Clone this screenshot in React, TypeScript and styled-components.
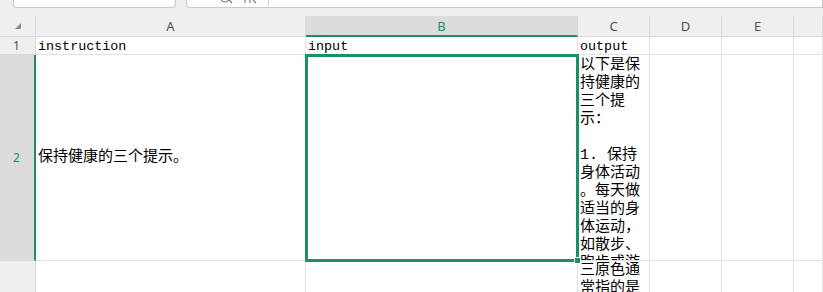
import React from 'react'
import styled, { createGlobalStyle } from 'styled-components'

const GREEN = '#1d8f68'
const GRID = '#e2e2e2'

const GlobalStyle = createGlobalStyle`
  html, body {
    margin: 0;
    padding: 0;
    background: #ffffff;
    overflow: hidden;
  }
  body {
    font-family: "Noto Sans", "Liberation Sans", sans-serif;
  }
`

const Page = styled.div`
  width: 823px;
  height: 292px;
  display: flex;
  flex-direction: column;
  overflow: hidden;
  background: #efefef;
`

const FormulaBar = styled.div`
  height: 16px;
  flex-shrink: 0;
  display: flex;
  align-items: flex-start;
  gap: 10px;
  padding-left: 13px;
  background: #efefef;
`

const BarBox = styled.div<{ grow?: boolean }>`
  height: 7px;
  width: ${({ grow }) => (grow ? 'auto' : '161px')};
  flex: ${({ grow }) => (grow ? '1' : 'none')};
  background: #ffffff;
  border: 1px solid #c9c9c9;
  border-top: none;
  border-radius: ${({ grow }) => (grow ? '0 0 0 4px' : '0 0 4px 4px')};
  position: relative;
  display: flex;
  align-items: flex-start;
`

const BarIcons = styled.div`
  margin-left: 34px;
  display: flex;
  align-items: flex-start;
  gap: 10px;
  height: 4px;
  overflow: hidden;
`

const BarDivider = styled.div`
  width: 1px;
  height: 6px;
  background: #d0d0d0;
  margin-left: 11px;
`

const Sheet = styled.div`
  flex: 1;
  display: grid;
  grid-template-columns: 36px 270px 272px 72px 72px 72px 1fr;
  grid-template-rows: 21px 18px 206px 1fr;
  background: #ffffff;
`

const Corner = styled.div`
  background: #efefef;
  border-right: 1px solid #dadada;
  border-bottom: 1px solid #dadada;
  box-sizing: border-box;
  display: flex;
  align-items: center;
  justify-content: flex-start;
  padding-left: 15px;
`

const ColHead = styled.div<{ active?: boolean }>`
  box-sizing: border-box;
  background: ${({ active }) => (active ? '#dcdcdc' : '#efefef')};
  border-right: 1px solid #dadada;
  border-bottom: ${({ active }) => (active ? `2px solid ${GREEN}` : '1px solid #dadada')};
  display: flex;
  align-items: center;
  justify-content: center;
  padding-bottom: ${({ active }) => (active ? '0' : '1px')};
  font-size: 13px;
  color: ${({ active }) => (active ? GREEN : '#505050')};
  font-family: "Noto Sans", "Liberation Sans", sans-serif;
`

const RowHead = styled.div<{ active?: boolean }>`
  box-sizing: border-box;
  background: ${({ active }) => (active ? '#dcdcdc' : '#efefef')};
  border-right: ${({ active }) => (active ? `2px solid ${GREEN}` : '1px solid #dadada')};
  border-bottom: 1px solid #dadada;
  display: flex;
  align-items: center;
  justify-content: center;
  padding-right: ${({ active }) => (active ? '1px' : '2px')};
  font-size: 12px;
  color: ${({ active }) => (active ? GREEN : '#505050')};
  font-family: "Noto Sans", "Liberation Sans", sans-serif;
`

const Cell = styled.div<{ valign?: 'center' | 'top' }>`
  box-sizing: border-box;
  position: relative;
  border-right: 1px solid ${GRID};
  border-bottom: 1px solid ${GRID};
  padding: 0 2px;
  display: flex;
  align-items: ${({ valign }) => (valign === 'center' ? 'center' : 'flex-start')};
  overflow: hidden;
  color: #000000;
`

const Latin = styled.span`
  font-family: "Liberation Mono", monospace;
  font-size: 13.4px;
  line-height: 19px;
  white-space: pre;
`

const Cjk = styled.span`
  font-family: "Liberation Mono", "Noto Sans CJK SC", monospace;
  font-size: 15px;
  line-height: 18px;
  white-space: pre;
`

const Wrapped = styled.div<{ offset: number }>`
  display: flex;
  flex-direction: column;
  padding-top: ${({ offset }) => offset}px;
  font-family: "Liberation Mono", "Noto Sans CJK SC", monospace;
  font-size: 15px;
  line-height: 18px;
  white-space: pre;
`

const Selection = styled.div`
  position: absolute;
  top: -1px;
  left: -1px;
  right: -2px;
  bottom: -2px;
  border: 3px solid ${GREEN};
  pointer-events: none;
  z-index: 2;
`

const FillHandle = styled.div`
  position: absolute;
  right: -4px;
  bottom: -4px;
  width: 5px;
  height: 5px;
  background: ${GREEN};
  border-top: 1px solid #ffffff;
  border-left: 1px solid #ffffff;
`

const SelectedCell = styled(Cell)`
  overflow: visible;
`

const columns = ['A', 'B', 'C', 'D', 'E', '']

const c2Lines = [
  '以下是保',
  '持健康的',
  '三个提',
  '示：',
  ' ',
  '1. 保持',
  '身体活动',
  '。每天做',
  '适当的身',
  '体运动，',
  '如散步、',
  '跑步或游',
]

const c3Lines = ['三原色通', '常指的是']

export default function App() {
  return (
    <Page>
      <GlobalStyle />
      <FormulaBar>
        <BarBox />
        <BarBox grow>
          <BarIcons>
            <svg width="12" height="4" viewBox="0 0 12 4">
              <path d="M8 0 L11 3" stroke="#777" strokeWidth="1.2" fill="none" />
              <circle cx="4" cy="-2" r="4" stroke="#777" strokeWidth="1.2" fill="none" />
            </svg>
            <svg width="14" height="4" viewBox="0 0 14 4">
              <path d="M2 0 V3 M7 0 V3 M10 0 L13 3" stroke="#777" strokeWidth="1.1" fill="none" />
            </svg>
          </BarIcons>
          <BarDivider />
        </BarBox>
      </FormulaBar>
      <Sheet>
        <Corner>
          <svg width="6" height="6" viewBox="0 0 6 6">
            <path d="M6 0 V6 H0 Z" fill="#8a8a8a" />
          </svg>
        </Corner>
        {columns.map((c) => (
          <ColHead key={c || 'F'} active={c === 'B'}>
            {c}
          </ColHead>
        ))}

        <RowHead>1</RowHead>
        <Cell>
          <Latin>instruction</Latin>
        </Cell>
        <Cell>
          <Latin>input</Latin>
        </Cell>
        <Cell>
          <Latin>output</Latin>
        </Cell>
        <Cell />
        <Cell />
        <Cell />

        <RowHead active>2</RowHead>
        <Cell valign="center">
          <Cjk>保持健康的三个提示。</Cjk>
        </Cell>
        <SelectedCell>
          <Selection>
            <FillHandle />
          </Selection>
        </SelectedCell>
        <Cell>
          <Wrapped offset={2}>
            {c2Lines.map((l, i) => (
              <span key={i}>{l}</span>
            ))}
          </Wrapped>
        </Cell>
        <Cell />
        <Cell />
        <Cell />

        <RowHead />
        <Cell />
        <Cell />
        <Cell>
          <Wrapped offset={1}>
            {c3Lines.map((l, i) => (
              <span key={i}>{l}</span>
            ))}
          </Wrapped>
        </Cell>
        <Cell />
        <Cell />
        <Cell />
      </Sheet>
    </Page>
  )
}
